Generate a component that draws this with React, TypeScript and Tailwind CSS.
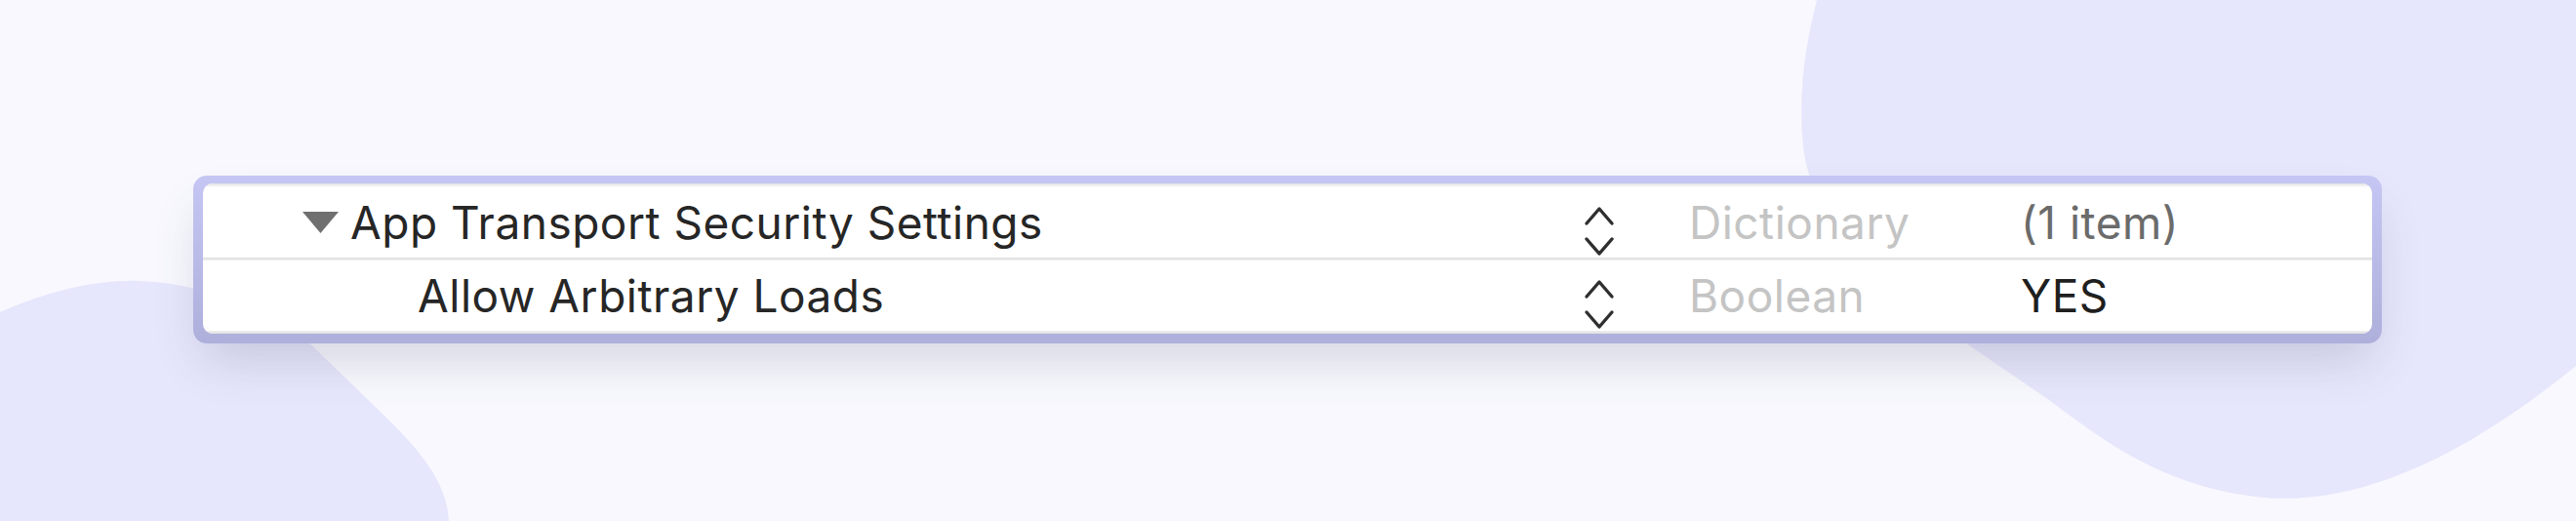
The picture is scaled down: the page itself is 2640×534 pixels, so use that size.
import React from 'react';

type Row = {
  keyName: string;
  indent: number;
  expanded?: boolean;
  type: string;
  value: string;
  valueMuted?: boolean;
};

const rows: Row[] = [
  { keyName: 'App Transport Security Settings', indent: 102, expanded: true, type: 'Dictionary', value: '(1 item)', valueMuted: true },
  { keyName: 'Allow Arbitrary Loads', indent: 220, type: 'Boolean', value: 'YES' },
];

function Backdrop() {
  return (
    <svg
      viewBox="0 0 2640 534"
      className="pointer-events-none absolute inset-0 h-full w-full"
      aria-hidden="true"
    >
      <path
        d="M1862 0 L2640 0 L2640 375 C2560 440 2440 520 2320 510 C2220 500 2160 455 2100 410 C2000 340 1860 260 1848 150 C1842 90 1852 40 1862 0 Z"
        fill="#e6e6fc"
      />
      <path
        d="M0 320 C50 298 100 286 145 288 C200 290 250 310 300 335 L400 432 C440 472 458 500 460 534 L0 534 Z"
        fill="#e6e6fc"
      />
    </svg>
  );
}

function Disclosure() {
  return (
    <svg viewBox="0 0 37 22" className="h-[22px] w-[37px] shrink-0" aria-hidden="true">
      <path d="M0 0 L37 0 L18.5 22 Z" fill="#6f6f6f" />
    </svg>
  );
}

function Stepper() {
  return (
    <svg
      viewBox="0 0 32 52"
      className="mt-[18px] h-[52px] w-[32px]"
      fill="none"
      stroke="#2f2f2f"
      strokeWidth="3.4"
      strokeLinecap="round"
      strokeLinejoin="round"
      aria-hidden="true"
    >
      <path d="M3 18 L16 3 L29 18" />
      <path d="M3 34 L16 49 L29 34" />
    </svg>
  );
}

function PlistRow({ row }: { row: Row }) {
  return (
    <div className="grid h-[72px] grid-cols-[1415px_108px_340px_1fr] items-center">
      <div className="flex items-center gap-[12px]" style={{ paddingLeft: row.indent }}>
        {row.expanded && <Disclosure />}
        <span className="text-[#262626]">{row.keyName}</span>
      </div>
      <div className="flex h-full items-center">
        <Stepper />
      </div>
      <span className="text-[#c4c4c4]">{row.type}</span>
      <span className={row.valueMuted ? 'text-[#6b6b6b]' : 'text-[#1f1f1f]'}>{row.value}</span>
    </div>
  );
}

export default function App() {
  return (
    <div className="relative h-[534px] w-full overflow-hidden bg-[#f8f8fe]">
      <Backdrop />
      <div className="relative pl-[198px] pt-[180px]">
        <div className="w-[2243px] rounded-[14px] bg-gradient-to-b from-[#c6c6f4] to-[#afafdc] px-[10px] pb-[10px] pt-[8px] shadow-[0_26px_50px_-10px_rgba(70,70,100,0.2)]">
          <div className="overflow-hidden rounded-[10px] bg-white font-['Inter','Liberation_Sans',sans-serif] text-[46px] leading-none tracking-[0.5px]">
            <div className="h-[4px] bg-gradient-to-b from-[#e0e0e0] to-white" />
            <PlistRow row={rows[0]} />
            <div className="h-[3px] bg-gradient-to-b from-[#dedede] to-[#efefef]" />
            <PlistRow row={rows[1]} />
            <div className="h-[3px] bg-gradient-to-b from-[#efefef] to-[#e0e0e0]" />
          </div>
        </div>
      </div>
    </div>
  );
}
